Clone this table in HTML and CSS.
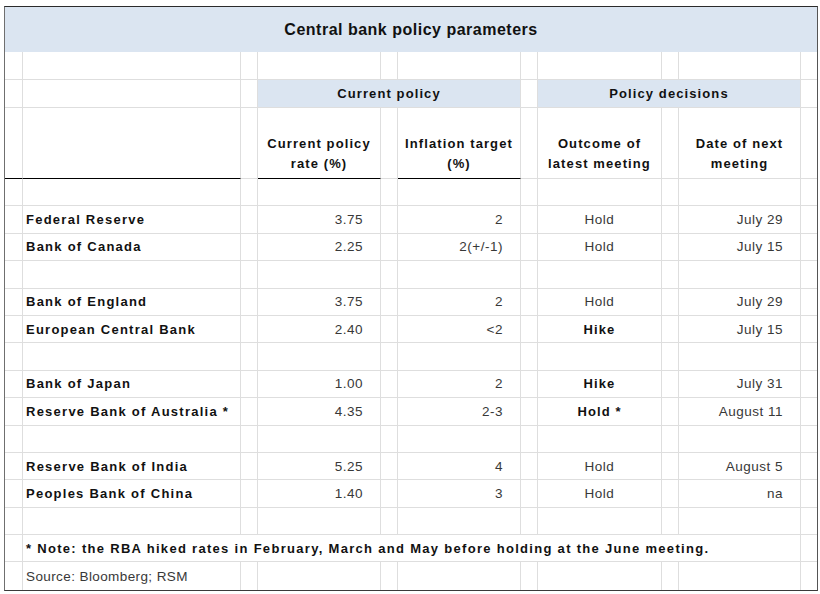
FILE: index.html
```html
<!DOCTYPE html>
<html>
<head>
<meta charset="utf-8">
<link rel="stylesheet" href="styles.css">
</head>
<body>
<div class="sheet">
  <div class="row r-title"><div class="c title">Central bank policy parameters</div></div>

  <div class="row r-std">
    <div class="c"></div><div class="c"></div><div class="c"></div><div class="c"></div><div class="c"></div><div class="c"></div><div class="c"></div><div class="c"></div><div class="c"></div><div class="c"></div><div class="c"></div>
  </div>

  <div class="row r-band">
    <div class="c"></div><div class="c"></div><div class="c"></div>
    <div class="c band span3">Current policy</div>
    <div class="c"></div>
    <div class="c band span3">Policy decisions</div>
    <div class="c"></div>
  </div>

  <div class="row r-head">
    <div class="c thick"></div><div class="c thick"></div><div class="c"></div>
    <div class="c thick hd">Current policy<br>rate (%)</div>
    <div class="c"></div>
    <div class="c thick hd">Inflation target<br>(%)</div>
    <div class="c"></div>
    <div class="c hd">Outcome of<br>latest meeting</div>
    <div class="c"></div>
    <div class="c hd">Date of next<br>meeting</div>
    <div class="c"></div>
  </div>

  <div class="row r-data">
    <div class="c"></div><div class="c"></div><div class="c"></div><div class="c"></div><div class="c"></div><div class="c"></div><div class="c"></div><div class="c"></div><div class="c"></div><div class="c"></div><div class="c"></div>
  </div>

  <div class="row r-data">
    <div class="c"></div><div class="c name">Federal Reserve</div><div class="c"></div>
    <div class="c num">3.75</div><div class="c"></div>
    <div class="c num">2</div><div class="c"></div>
    <div class="c mid">Hold</div><div class="c"></div>
    <div class="c num">July 29</div><div class="c"></div>
  </div>

  <div class="row r-data">
    <div class="c"></div><div class="c name">Bank of Canada</div><div class="c"></div>
    <div class="c num">2.25</div><div class="c"></div>
    <div class="c num">2(+/-1)</div><div class="c"></div>
    <div class="c mid">Hold</div><div class="c"></div>
    <div class="c num">July 15</div><div class="c"></div>
  </div>

  <div class="row r-data">
    <div class="c"></div><div class="c"></div><div class="c"></div><div class="c"></div><div class="c"></div><div class="c"></div><div class="c"></div><div class="c"></div><div class="c"></div><div class="c"></div><div class="c"></div>
  </div>

  <div class="row r-data">
    <div class="c"></div><div class="c name">Bank of England</div><div class="c"></div>
    <div class="c num">3.75</div><div class="c"></div>
    <div class="c num">2</div><div class="c"></div>
    <div class="c mid">Hold</div><div class="c"></div>
    <div class="c num">July 29</div><div class="c"></div>
  </div>

  <div class="row r-data">
    <div class="c"></div><div class="c name">European Central Bank</div><div class="c"></div>
    <div class="c num">2.40</div><div class="c"></div>
    <div class="c num">&lt;2</div><div class="c"></div>
    <div class="c mid strong">Hike</div><div class="c"></div>
    <div class="c num">July 15</div><div class="c"></div>
  </div>

  <div class="row r-data">
    <div class="c"></div><div class="c"></div><div class="c"></div><div class="c"></div><div class="c"></div><div class="c"></div><div class="c"></div><div class="c"></div><div class="c"></div><div class="c"></div><div class="c"></div>
  </div>

  <div class="row r-data">
    <div class="c"></div><div class="c name">Bank of Japan</div><div class="c"></div>
    <div class="c num">1.00</div><div class="c"></div>
    <div class="c num">2</div><div class="c"></div>
    <div class="c mid strong">Hike</div><div class="c"></div>
    <div class="c num">July 31</div><div class="c"></div>
  </div>

  <div class="row r-data">
    <div class="c"></div><div class="c name">Reserve Bank of Australia *</div><div class="c"></div>
    <div class="c num">4.35</div><div class="c"></div>
    <div class="c num">2-3</div><div class="c"></div>
    <div class="c mid strong">Hold *</div><div class="c"></div>
    <div class="c num">August 11</div><div class="c"></div>
  </div>

  <div class="row r-data">
    <div class="c"></div><div class="c"></div><div class="c"></div><div class="c"></div><div class="c"></div><div class="c"></div><div class="c"></div><div class="c"></div><div class="c"></div><div class="c"></div><div class="c"></div>
  </div>

  <div class="row r-data">
    <div class="c"></div><div class="c name">Reserve Bank of India</div><div class="c"></div>
    <div class="c num">5.25</div><div class="c"></div>
    <div class="c num">4</div><div class="c"></div>
    <div class="c mid">Hold</div><div class="c"></div>
    <div class="c num">August 5</div><div class="c"></div>
  </div>

  <div class="row r-data">
    <div class="c"></div><div class="c name">Peoples Bank of China</div><div class="c"></div>
    <div class="c num">1.40</div><div class="c"></div>
    <div class="c num">3</div><div class="c"></div>
    <div class="c mid">Hold</div><div class="c"></div>
    <div class="c num">na</div><div class="c"></div>
  </div>

  <div class="row r-data">
    <div class="c"></div><div class="c"></div><div class="c"></div><div class="c"></div><div class="c"></div><div class="c"></div><div class="c"></div><div class="c"></div><div class="c"></div><div class="c"></div><div class="c"></div>
  </div>

  <div class="row r-data">
    <div class="c"></div>
    <div class="c name note">* Note: the RBA hiked rates in February, March and May before holding at the June meeting.</div>
    <div class="c"></div>
  </div>

  <div class="row r-data last">
    <div class="c"></div><div class="c src">Source: Bloomberg; RSM</div><div class="c"></div><div class="c"></div><div class="c"></div><div class="c"></div><div class="c"></div><div class="c"></div><div class="c"></div><div class="c"></div><div class="c"></div>
  </div>
</div>
</body>
</html>
```

FILE: styles.css
```css
html, body {
  margin: 0;
  padding: 0;
  background: #ffffff;
}

body {
  font-family: "Liberation Sans", Arial, sans-serif;
  color: #111111;
}

.sheet {
  margin: 6px 0 0 4px;
  width: 812px;
  border-top: 1px solid #2b2b2b;
  border-left: 1px solid #6f6f6f;
  border-right: 1px solid #555555;
  border-bottom: 1px solid #3a3a3a;
}

.row {
  display: grid;
  grid-template-columns: 18px 218px 17px 123px 17px 123px 17px 124px 17px 122px 16px;
}

.r-title { height: 45px; }
.r-std { height: 28px; }
.r-band { height: 28px; }
.r-head { height: 71px; }
.r-data { height: 27.4px; }

.c {
  box-sizing: border-box;
  border-right: 1px solid #dedede;
  border-bottom: 1px solid #dedede;
  display: flex;
  align-items: center;
  font-size: 13px;
  white-space: nowrap;
  overflow: visible;
  min-width: 0;
}

.row > .c:last-child { border-right: none; }
.last > .c { border-bottom: none; }

.title {
  grid-column: 1 / -1;
  border: none;
  background: #dbe5f1;
  justify-content: center;
  font-size: 16px;
  font-weight: bold;
  letter-spacing: 0.5px;
  color: #111111;
}

.band {
  background: #dbe5f1;
  justify-content: center;
  font-weight: bold;
  letter-spacing: 1.1px;
}

.span3 { grid-column: span 3; }

.thick { border-bottom: 1px solid #000000; }

.hd {
  align-items: flex-end;
  justify-content: center;
  text-align: center;
  font-weight: bold;
  letter-spacing: 1.1px;
  line-height: 20px;
  padding-bottom: 4px;
}

.name {
  padding-left: 3px;
  font-weight: bold;
  letter-spacing: 1.25px;
}

.note {
  grid-column: span 9;
  letter-spacing: 1.3px;
}

.num {
  justify-content: flex-end;
  padding-right: 17px;
  color: #383838;
  font-size: 13.5px;
  letter-spacing: 0.5px;
}

.mid {
  justify-content: center;
  color: #383838;
  font-size: 13.5px;
  letter-spacing: 0.5px;
}

.strong {
  font-weight: bold;
  font-size: 13px;
  color: #111111;
  letter-spacing: 1.1px;
}

.src {
  padding-left: 3px;
  color: #383838;
  font-size: 13.5px;
  letter-spacing: 0.4px;
}
```
